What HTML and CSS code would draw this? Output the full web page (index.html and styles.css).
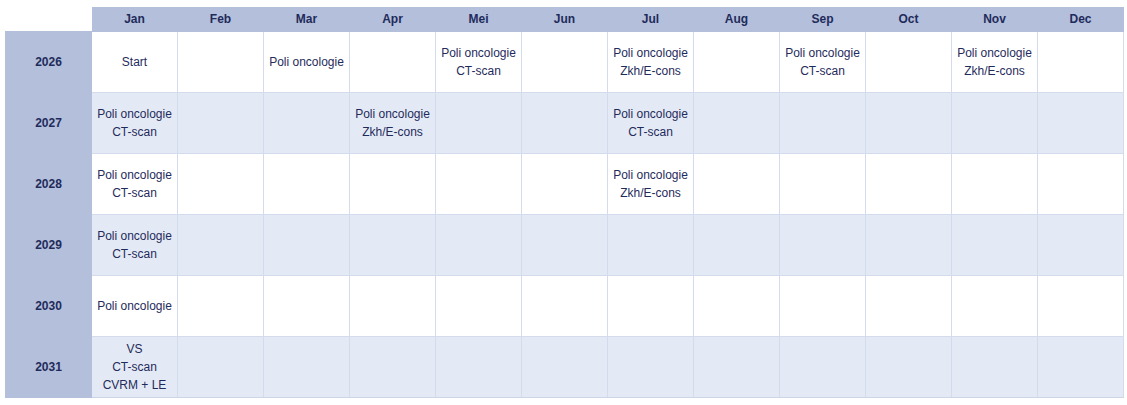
FILE: index.html
```html
<!DOCTYPE html>
<html>
<head>
<meta charset="utf-8">
<link rel="stylesheet" href="styles.css">
</head>
<body>
<table class="plan">
  <colgroup>
    <col class="c-year">
    <col span="12">
  </colgroup>
  <thead>
    <tr>
      <th class="corner"></th>
      <th>Jan</th><th>Feb</th><th>Mar</th><th>Apr</th><th>Mei</th><th>Jun</th>
      <th>Jul</th><th>Aug</th><th>Sep</th><th>Oct</th><th>Nov</th><th>Dec</th>
    </tr>
  </thead>
  <tbody>
    <tr>
      <th class="year">2026</th>
      <td>Start</td><td></td><td>Poli oncologie</td><td></td>
      <td>Poli oncologie<br>CT-scan</td><td></td>
      <td>Poli oncologie<br>Zkh/E-cons</td><td></td>
      <td>Poli oncologie<br>CT-scan</td><td></td>
      <td>Poli oncologie<br>Zkh/E-cons</td><td></td>
    </tr>
    <tr class="alt">
      <th class="year">2027</th>
      <td>Poli oncologie<br>CT-scan</td><td></td><td></td>
      <td>Poli oncologie<br>Zkh/E-cons</td><td></td><td></td>
      <td>Poli oncologie<br>CT-scan</td><td></td><td></td><td></td><td></td><td></td>
    </tr>
    <tr>
      <th class="year">2028</th>
      <td>Poli oncologie<br>CT-scan</td><td></td><td></td><td></td><td></td><td></td>
      <td>Poli oncologie<br>Zkh/E-cons</td><td></td><td></td><td></td><td></td><td></td>
    </tr>
    <tr class="alt">
      <th class="year">2029</th>
      <td>Poli oncologie<br>CT-scan</td><td></td><td></td><td></td><td></td><td></td>
      <td></td><td></td><td></td><td></td><td></td><td></td>
    </tr>
    <tr>
      <th class="year">2030</th>
      <td>Poli oncologie</td><td></td><td></td><td></td><td></td><td></td>
      <td></td><td></td><td></td><td></td><td></td><td></td>
    </tr>
    <tr class="alt">
      <th class="year">2031</th>
      <td>VS<br>CT-scan<br>CVRM + LE</td><td></td><td></td><td></td><td></td><td></td>
      <td></td><td></td><td></td><td></td><td></td><td></td>
    </tr>
  </tbody>
</table>
</body>
</html>
```

FILE: styles.css
```css
html, body {
  margin: 0;
  padding: 0;
  background: #ffffff;
}

body {
  padding: 7px 0 0 5px;
  font-family: "Liberation Sans", Arial, sans-serif;
  font-size: 12px;
  color: #1f2b5b;
}

.plan {
  border-collapse: collapse;
  table-layout: fixed;
  width: 1119px;
}

.c-year {
  width: 86px;
}

.plan thead th {
  height: 24px;
  padding: 0;
  background: #b3bfdb;
  font-weight: bold;
  font-size: 12px;
  text-align: center;
  vertical-align: middle;
  color: #1f2b5b;
}

.plan thead th.corner {
  background: #ffffff;
}

.plan tbody tr {
  height: 61px;
}

.plan tbody td {
  padding: 0;
  text-align: center;
  vertical-align: middle;
  line-height: 18px;
  border: 1px solid #d3dbec;
  background: #ffffff;
}

.plan tbody tr.alt td {
  background: #e4eaf5;
}

.plan tbody th.year {
  padding: 0;
  background: #b3bfdb;
  font-weight: bold;
  text-align: center;
  vertical-align: middle;
  border: 1px solid #b3bfdb;
}

.plan tbody tr:first-child td {
  border-top: none;
}

.plan tbody td:last-child {
  border-right: 1px solid #d3dbec;
}

.plan tbody tr:last-child td {
  border-bottom: 1px solid #ccd4e6;
}
```
